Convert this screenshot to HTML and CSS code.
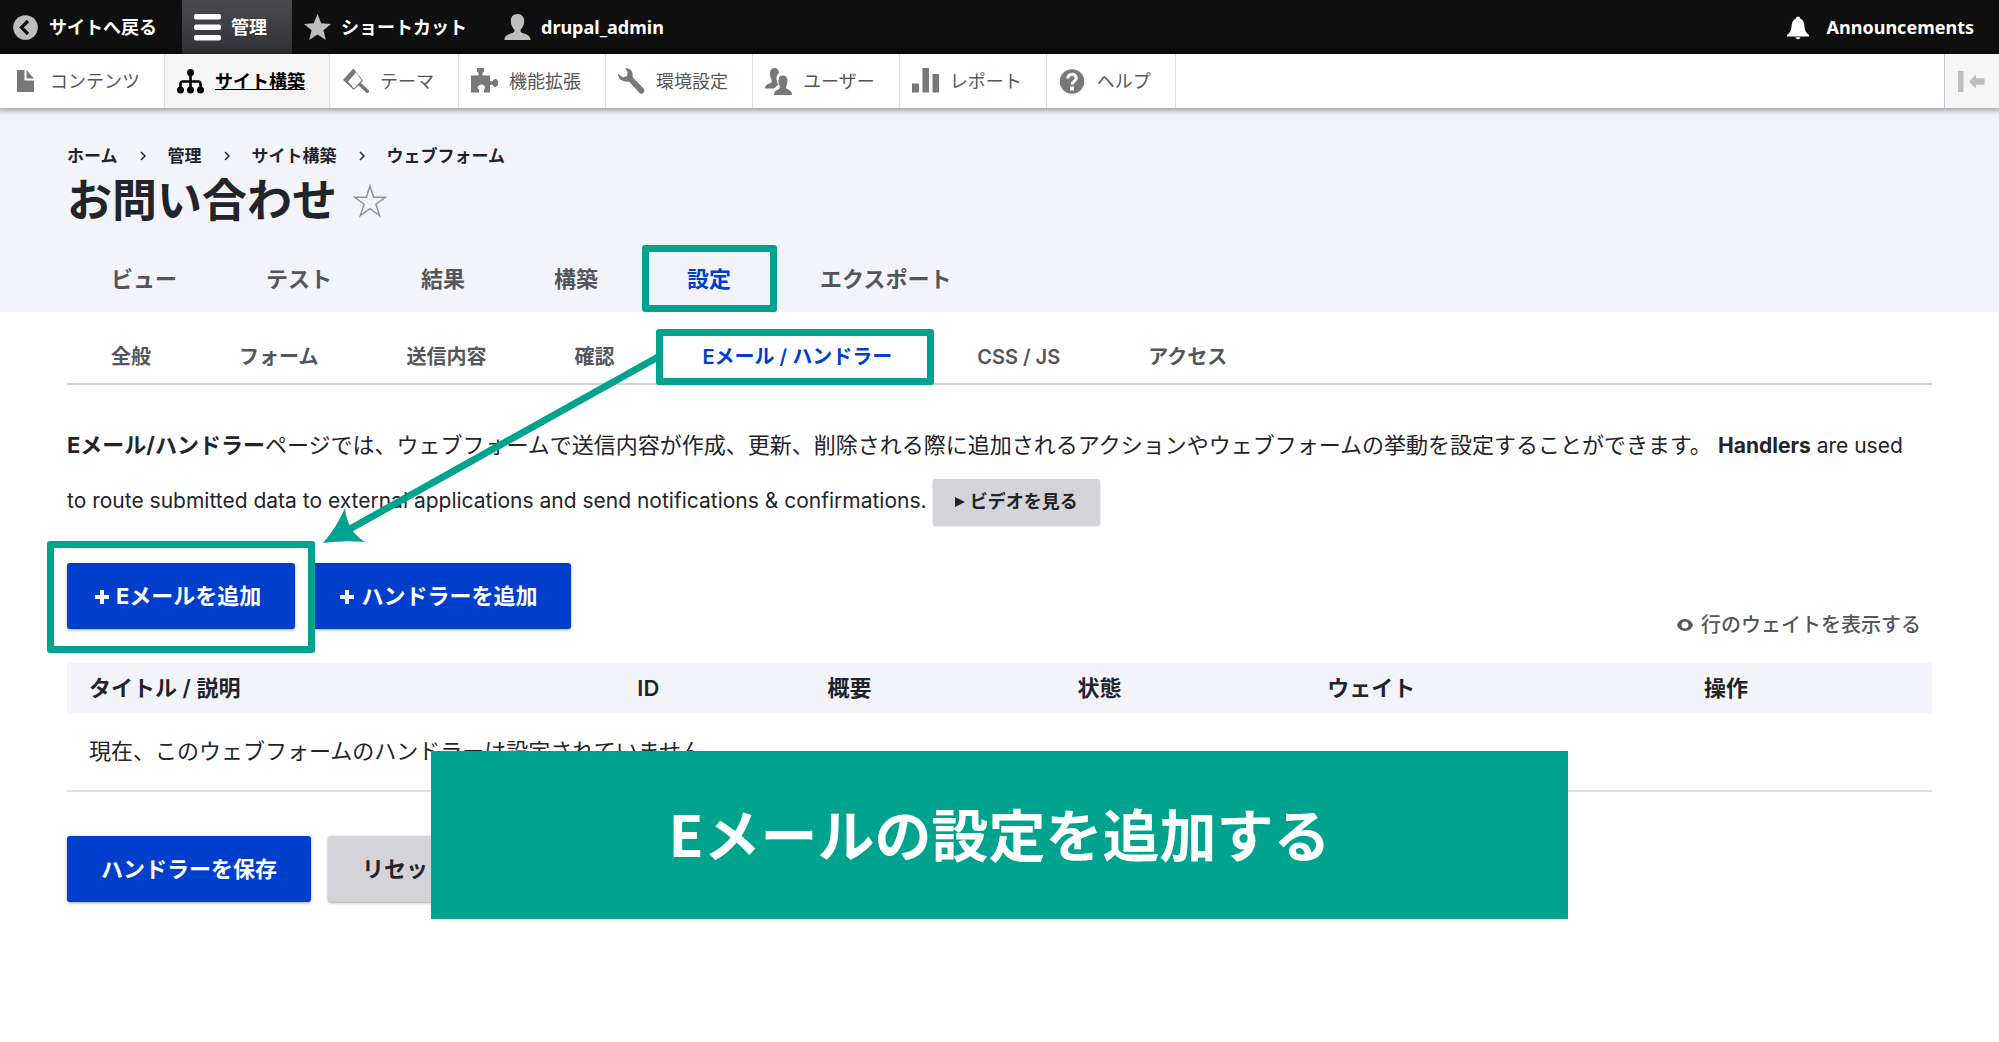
FILE: index.html
```html
<!DOCTYPE html>
<html lang="ja">
<head>
<meta charset="utf-8">
<meta name="viewport" content="width=device-width, initial-scale=1">
<title>お問い合わせ</title>
<link rel="stylesheet" href="styles.css">
</head>
<body>
<nav class="toolbar" aria-label="ツールバー">
  <a class="toolbar-item" href="#"><svg class="icon muted" viewBox="0 0 27 27"><circle cx="13.500" cy="13.500" r="12.300"/><path d="M16 7l-6.500 6.500 6.500 6.500" fill="none" stroke="#0f0f0f" stroke-width="3.200"/></svg>サイトへ戻る</a>
  <a class="toolbar-item is-open" href="#"><svg class="icon" viewBox="0 0 27 27"><rect x="0" y="0" width="27" height="5.500" rx="2"/><rect x="0" y="10.500" width="27" height="5.500" rx="2"/><rect x="0" y="21" width="27" height="5.500" rx="2"/></svg>管理</a>
  <a class="toolbar-item" href="#"><svg class="icon muted" viewBox="0 0 27 27"><path d="M13.500 0l3.700 9.300 9.800.700-7.600 6.300 2.500 9.700-8.400-5.400L5.100 26l2.500-9.700L0 10l9.800-.700z"/></svg>ショートカット</a>
  <a class="toolbar-item" href="#"><svg class="icon muted" viewBox="0 0 27 27"><path d="M13.500 0c4.500 0 6.700 3 6.700 7 0 3.500-1.200 6-3.200 8.300-1 1.700-.500 3 1.500 3.700 4 1.300 8 2.500 8 7H.500c0-4.500 4-5.700 8-7 2-.700 2.500-2 1.500-3.700C8 13 6.800 10.500 6.800 7c0-4 2.200-7 6.700-7z"/></svg>drupal_admin</a>
  <a class="toolbar-item toolbar-end" href="#"><svg class="icon" viewBox="3 0 27 27"><path d="M14 2.500c1.200 0 1.900.8 1.900 1.800 3.100 1.200 4.300 4.200 4.600 8 .3 4.200 1.300 6.200 4.500 8.700v1.500H3V21c3.200-2.500 4.200-4.500 4.500-8.700.3-3.800 1.500-6.800 4.600-8 0-1 .7-1.800 1.900-1.800zM11.500 23.300h5c-.3 1.300-1.300 2-2.500 2s-2.200-.7-2.500-2z"/></svg>Announcements</a>
</nav>
<nav class="tray" aria-label="管理メニュー">
  <a class="tray-item" href="#"><svg class="icon" viewBox="0 0 27 27"><path d="M5 2h7.500v10.500H22V24H5z"/><path d="M14.500 2l7.500 8.500h-7.500z"/></svg>コンテンツ</a>
  <a class="tray-item is-active" href="#"><svg class="icon" viewBox="0 0 27 27"><circle cx="13.500" cy="4.500" r="3.500"/><circle cx="3.500" cy="22" r="3.500"/><circle cx="13.500" cy="22" r="3.500"/><circle cx="23.500" cy="22" r="3.500"/><path d="M13.500 4v17M3.500 21v-5q0-2.500 2.500-2.500h15q2.500 0 2.500 2.500v5" fill="none" stroke="currentColor" stroke-width="2.600"/></svg><span>サイト構築</span></a>
  <a class="tray-item" href="#"><svg class="icon" viewBox="0 0 27 27"><path fill-rule="evenodd" d="M11.300.5L21 12.500l-2 2.500 8 7.500c.8 1.500-1 3.300-2.500 2.500l-8-7.500-4.700 4.500L1 12zM14 4.500L6 13.500l6 7 7.500-8.300z"/></svg>テーマ</a>
  <a class="tray-item" href="#"><svg class="icon" viewBox="0 0 27 27"><path d="M6 0h7v3.500L11.500 5v2.500H19v5.500l2 .500 2.500-2.500H25l2 2v4l-2 2h-1.500L21 16.500l-2 .500v7.500h-6v-3l1-1.500c0-2-1.500-3.500-3.500-3.500S6.500 18 6.500 20L8 21.500v3H0v-17h7.500V5L6 3.500z"/></svg>機能拡張</a>
  <a class="tray-item" href="#"><svg class="icon" viewBox="0 0 27 27"><path d="M7 0c6 0 8.500 4 7.500 9L26 21c1.500 2.500-1.500 6-4 4.500L11 13.500C6 14.500 0 12 0 5.500L5 9.500l4-1.500.5-4z"/></svg>環境設定</a>
  <a class="tray-item" href="#"><svg class="icon" viewBox="0 0 27 27"><path d="M9.500 0c3 0 4.500 2.500 4.500 5-3 2-3.500 7-.500 11.500L9 20.500H0c0-3.500 3-4.500 5.500-5.500 2-1 1.500-2.500.500-4.500C4 6 4.500 0 9.500 0z"/><path d="M18 7.500c4.500 0 5.500 5 3.500 10-.700 2-.500 3 1.500 4s4 2 4 5.500H9c0-3.500 2-4.500 4-5.500s2.200-2 1.500-4c-2-5-1-10 3.500-10z"/></svg>ユーザー</a>
  <a class="tray-item" href="#"><svg class="icon" viewBox="0 0 27 27"><rect x="0" y="15.500" width="7" height="9"/><rect x="10.500" y="0" width="6.500" height="24.500"/><rect x="20.500" y="6" width="6.500" height="18.500"/></svg>レポート</a>
  <a class="tray-item" href="#"><svg class="icon" viewBox="0 0 27 27"><circle cx="13" cy="13.500" r="12.200"/><path d="M8.800 10.500c0-5.500 8.400-5.500 8.400-.500 0 3.500-4.200 3.300-4.200 6.500" fill="none" stroke="#fff" stroke-width="3.200"/><rect x="11" y="18.500" width="4" height="4" fill="#fff"/></svg>ヘルプ</a>
  <button class="tray-toggle" type="button" aria-label="縦方向"><svg class="icon" viewBox="0 0 27 27"><rect x="0" y="3" width="5.500" height="21"/><path d="M11 13.500l7-7v3.700h8.500v6.600H18v3.700z"/></svg></button>
</nav>
<header class="page-head">
  <nav class="breadcrumb" aria-label="パンくず"><a href="#">ホーム</a><svg viewBox="0 0 6 10"><path d="M1 1l4 4-4 4"/></svg><a href="#">管理</a><svg viewBox="0 0 6 10"><path d="M1 1l4 4-4 4"/></svg><a href="#">サイト構築</a><svg viewBox="0 0 6 10"><path d="M1 1l4 4-4 4"/></svg><a href="#">ウェブフォーム</a></nav>
  <div class="title-row">
    <h1>お問い合わせ</h1>
    <button class="star" type="button" aria-label="ショートカットに追加"><svg viewBox="0 0 34 34"><path d="M17 2l3.700 11.200h11.800L23 20.200l3.600 11.300L17 24.600l-9.600 6.900L11 20.200l-9.500-7h11.800z"/></svg></button>
  </div>
  <nav class="tabs" aria-label="メインタブ">
    <a href="#">ビュー</a><a href="#">テスト</a><a href="#">結果</a><a href="#">構築</a><a class="is-active marked" href="#">設定</a><a href="#">エクスポート</a>
  </nav>
</header>
<main class="content">
  <nav class="subtabs" aria-label="サブタブ">
    <a href="#">全般</a><a href="#">フォーム</a><a href="#">送信内容</a><a href="#">確認</a><a class="is-active marked" href="#">Eメール / ハンドラー<svg class="arrow" viewBox="0 0 335 192"><path d="M335 6L25 179" fill="none" stroke="#00a38d" stroke-width="7"/><path d="M22 157Q23 169 29 179Q34 186 42 191Q20 189 0 192Q14 176 22 157z" fill="#00a38d"/></svg></a><a href="#">CSS / JS</a><a href="#">アクセス</a>
  </nav>
  <p class="help"><strong>Eメール/ハンドラー</strong>ページでは、ウェブフォームで送信内容が作成、更新、削除される際に追加されるアクションやウェブフォームの挙動を設定することができます。 <span class="latin" lang="en"><strong>Handlers</strong> are used to route submitted data to external applications and send notifications &amp; confirmations.</span> <button class="video" type="button"><svg viewBox="0 0 10 10"><path d="M0 0l10 5-10 5z"/></svg>ビデオを見る</button></p>
  <div class="list-tools">
    <span class="marked"><button class="btn add" type="button"><svg viewBox="0 -6 14 20"><path d="M5 0h4v5h5v4H9v5H5V9H0V5h5z"/></svg>Eメールを追加</button></span>
    <button class="btn add" type="button"><svg viewBox="0 -6 14 20"><path d="M5 0h4v5h5v4H9v5H5V9H0V5h5z"/></svg>ハンドラーを追加</button>
    <button class="weights" type="button"><svg viewBox="0 0 16 12"><path fill-rule="evenodd" d="M8 0c4 0 7 3 8 6-1 3-4 6-8 6S1 9 0 6c1-3 4-6 8-6zm0 2.500a3.500 3.500 0 1 0 0 7 3.500 3.500 0 0 0 0-7z"/></svg>行のウェイトを表示する</button>
  </div>
  <table class="handlers">
    <thead><tr><th class="col-title">タイトル / 説明</th><th class="col-id">ID</th><th class="col-mid">概要</th><th class="col-mid">状態</th><th class="col-weight">ウェイト</th><th>操作</th></tr></thead>
    <tbody><tr><td colspan="6">現在、このウェブフォームのハンドラーは設定されていません。</td></tr></tbody>
  </table>
  <div class="actions">
    <button class="btn" type="button">ハンドラーを保存</button>
    <button class="btn btn-grey" type="button">リセット</button>
  </div>
</main>
<div class="caption">Eメールの設定を追加する</div>
</body>
</html>
```
FILE: styles.css
```css
* { box-sizing: border-box; }
body {
  margin: 0;
  position: relative;
  background: #fff;
  color: #232429;
  font-family: Inter, "Noto Sans CJK JP", sans-serif;
  font-size: 22px;
}
a { color: inherit; text-decoration: none; }
button { font: inherit; border: 0; margin: 0; padding: 0; cursor: pointer; }
svg { flex: none; fill: currentColor; }

/* Toolbar */
.toolbar, .tray {
  display: flex;
  height: 54px;
  font-family: "Noto Sans", "Noto Sans CJK JP", sans-serif;
  font-size: 18px;
  line-height: 24px;
}
.toolbar { background: #0f0f0f; color: #fff; font-weight: 700; }
.toolbar-item, .tray-item {
  display: flex;
  align-items: center;
  gap: 10px;
  padding: 0 25px 0 12px;
  white-space: nowrap;
}
.icon { width: 27px; height: 27px; }
.muted { color: #bebebe; }
.toolbar-item.is-open { background: linear-gradient(#4a4a4f, #323236); }
.toolbar-end { margin-left: auto; gap: 13px; }
.tray {
  position: relative;
  color: #565656;
  background: #fff;
  box-shadow: 0 0 6px 2px rgba(0, 0, 0, .4);
}
.tray-item { gap: 11px; padding-right: 24px; border-right: 1px solid #ddd; }
.tray-item .icon { color: #787878; }
.tray-item.is-active, .tray-item.is-active .icon { color: #000; }
.tray-item.is-active { background: #f5f5f5; font-weight: 700; }
.tray-item.is-active span { text-decoration: underline; }
.tray-toggle {
  margin-left: auto;
  padding: 0 14px 0 13px;
  background: #f5f5f5;
  color: #bebebe;
  border-left: 1px solid #c8c8d0;
}
.tray-toggle .icon { display: block; }

/* Page header */
.page-head { background: #f3f4f9; padding: 36px 67px 0; }
.breadcrumb {
  display: flex;
  align-items: center;
  gap: 22px;
  font-size: 17px;
  font-weight: 700;
  line-height: 24px;
}
.breadcrumb svg { width: 6px; height: 10px; fill: none; stroke: currentColor; stroke-width: 1.5; }
.title-row { display: flex; align-items: center; gap: 16px; padding: 3px 0 14px; }
h1 { margin: 0; font-size: 45px; line-height: 60px; font-weight: 700; }
.star { background: none; color: #919297; }
.star svg { display: block; width: 34px; height: 34px; fill: none; stroke: currentColor; stroke-width: 1.5; }
.tabs, .subtabs { display: flex; font-weight: 600; color: #55565b; white-space: nowrap; }
.tabs a { padding: 2px 45px 0 44px; line-height: 65px; }
.tabs .is-active, .subtabs .is-active { color: #003ecc; }

.marked { position: relative; }
.marked::after {
  content: "";
  position: absolute;
  inset: 0 -1px;
  border: 7px solid #00a38d;
  border-radius: 3px;
  pointer-events: none;
  z-index: 2;
}

/* Content */
.content { padding: 17px 67px 134px; }
.subtabs { font-size: 20px; line-height: 52px; border-bottom: 2px solid #d4d4d8; }
.subtabs a { padding: 2px 44px 0; }
.subtabs a.marked { padding-right: 41px; }
.subtabs .marked::after { inset: 0 -1px -2px -2px; }
.arrow { position: absolute; top: 22px; right: 100%; width: 335px; height: 192px; z-index: 3; }
.help { margin: 33px 0 35px; padding-right: 10px; line-height: 54px; }
.latin { font-size: 21px; }
.video {
  display: inline-flex;
  align-items: center;
  gap: 5px;
  height: 46px;
  padding: 0 22px;
  border-radius: 3px;
  background: #d4d4d8;
  color: #232429;
  font-size: 18px;
  font-weight: 700;
  vertical-align: middle;
  box-shadow: 0 1px 2px rgba(0, 0, 0, .25);
}
.video svg { width: 10px; height: 10px; }
.list-tools { display: flex; align-items: flex-start; gap: 17px; margin-bottom: 23px; }
.list-tools .marked::after { inset: -22px -20px -24px; }
.btn {
  display: flex;
  align-items: center;
  gap: 7px;
  height: 66px;
  padding: 0 34px 4px;
  border-radius: 3px;
  background: #003ecc;
  color: #fff;
  font-weight: 700;
  white-space: nowrap;
  box-shadow: 0 1px 3px rgba(0, 0, 0, .35);
}
.add { padding-left: 28px; }
.add svg { width: 14px; height: 20px; }
.btn-grey { background: #d4d4d8; color: #232429; }
.weights {
  display: flex;
  align-items: center;
  gap: 8px;
  margin-left: auto;
  padding: 47px 11px 0 0;
  background: none;
  color: #55565b;
  font-size: 20px;
  font-weight: 500;
  line-height: 30px;
}
.weights svg { width: 16px; height: 12px; }
.handlers { width: 100%; border-collapse: collapse; table-layout: fixed; line-height: 26px; }
.handlers th { padding: 12px 22px; background: #f3f4f9; text-align: left; font-weight: 600; }
.handlers td { padding: 25px 22px 26px; border-bottom: 2px solid #dedfe4; }
.col-title { width: 29.4%; }
.col-id { width: 10.2%; }
.col-mid { width: 13.4%; }
.col-weight { width: 20.2%; }
.actions { display: flex; gap: 17px; margin-top: 44px; }

.caption {
  position: absolute;
  top: 751px;
  left: 21.55%;
  right: 21.55%;
  z-index: 4;
  padding-bottom: 6px;
  background: #00a38d;
  color: #fff;
  font-family: "Noto Sans CJK JP", sans-serif;
  font-size: 57px;
  font-weight: 700;
  line-height: 162px;
  text-align: center;
  white-space: nowrap;
}
```
